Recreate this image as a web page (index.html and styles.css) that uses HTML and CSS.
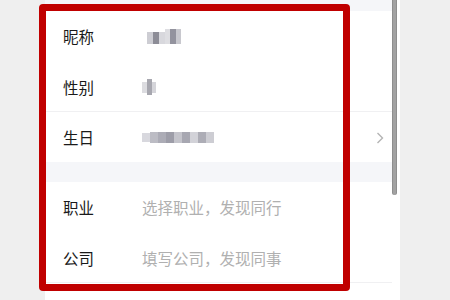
FILE: index.html
```html
<!DOCTYPE html>
<html lang="zh">
<head>
<meta charset="utf-8">
<link rel="stylesheet" href="styles.css">
</head>
<body>
<div class="page">
  <div class="panel">
    <div class="band top"></div>
    <div class="row">
      <span class="label">昵称</span>
      <span class="value">
        <svg class="mosaic nick" width="34" height="15" viewBox="0 0 34 15">
          <rect x="0" y="3" width="6" height="12" fill="#cdcdd3"/>
          <rect x="6" y="3" width="6" height="12" fill="#8d8d97"/>
          <rect x="12" y="3" width="6" height="12" fill="#d8d8dd"/>
          <rect x="18" y="0" width="5" height="15" fill="#dedee2"/>
          <rect x="23" y="0" width="6" height="15" fill="#93939e"/>
          <rect x="29" y="0" width="5" height="15" fill="#c8c8ce"/>
        </svg>
      </span>
    </div>
    <div class="row divided">
      <span class="label">性别</span>
      <span class="value">
        <svg class="mosaic" width="14" height="16" viewBox="0 0 14 16">
          <rect x="0" y="3" width="5" height="11" fill="#dcdce0"/>
          <rect x="5" y="0" width="5" height="16" fill="#a7a7af"/>
          <rect x="10" y="3" width="4" height="11" fill="#d5d5da"/>
        </svg>
      </span>
    </div>
    <div class="row">
      <span class="label">生日</span>
      <span class="value">
        <svg class="mosaic" width="72" height="15" viewBox="0 0 72 15">
          <rect x="0" y="3" width="8" height="9" fill="#d8d8de"/>
          <rect x="8" y="2" width="8" height="11" fill="#bcbcc4"/>
          <rect x="16" y="2" width="8" height="11" fill="#acacb6"/>
          <rect x="24" y="2" width="8" height="11" fill="#9d9da8"/>
          <rect x="32" y="2" width="8" height="11" fill="#c4c4cb"/>
          <rect x="40" y="2" width="8" height="11" fill="#a7a7b1"/>
          <rect x="48" y="2" width="8" height="11" fill="#d2d2d8"/>
          <rect x="56" y="2" width="8" height="11" fill="#adadb6"/>
          <rect x="64" y="2" width="8" height="11" fill="#cdcdd3"/>
        </svg>
      </span>
      <svg class="chev" width="8" height="12" viewBox="0 0 8 12">
        <path d="M1.5 1 L6.5 6 L1.5 11" fill="none" stroke="#b4b4b4" stroke-width="1.4"/>
      </svg>
    </div>
    <div class="band"></div>
    <div class="row">
      <span class="label">职业</span>
      <span class="value hint">选择职业，发现同行</span>
    </div>
    <div class="row divided">
      <span class="label">公司</span>
      <span class="value hint">填写公司，发现同事</span>
    </div>
    <div class="rest"></div>
    <div class="scrollbar"></div>
  </div>
  <div class="highlight"></div>
</div>
</body>
</html>
```
FILE: styles.css
```css
html, body {
  margin: 0;
  padding: 0;
}
body {
  background: #efefef;
  font-family: "Noto Sans CJK SC", "Noto Sans", sans-serif;
  width: 450px;
  height: 300px;
  overflow: hidden;
}
.page {
  position: relative;
  width: 450px;
  height: 300px;
}
.panel {
  position: relative;
  margin-left: 45px;
  width: 355px;
  height: 300px;
  background: #ffffff;
  display: flex;
  flex-direction: column;
}
.band {
  height: 20px;
  background: #f5f6f9;
  width: 347px;
}
.band.top {
  height: 11px;
}
.row {
  height: 50px;
  width: 347px;
  box-sizing: border-box;
  display: flex;
  align-items: center;
  padding-left: 18px;
  position: relative;
}
.row.divided {
  border-bottom: 1px solid #f0f0f2;
  height: 51px;
  padding-top: 1px;
}
.label {
  font-size: 15.5px;
  color: #1a1a1a;
  width: 79px;
  line-height: 20px;
}
.value {
  font-size: 15.5px;
  line-height: 20px;
  display: flex;
  align-items: center;
}
.hint {
  color: #b0b0b0;
}
.mosaic {
  display: block;
  filter: blur(0.7px);
}
.mosaic.nick {
  margin-left: 5px;
}
.chev {
  position: absolute;
  right: 8px;
  top: 20px;
}
.rest {
  flex: 1;
}
.scrollbar {
  position: absolute;
  left: 347px;
  top: 0;
  width: 5px;
  height: 195px;
  background: #a2a2a2;
  border-left: 1px solid #8e8e8e;
  border-right: 1px solid #8e8e8e;
  border-radius: 0 0 3px 3px;
  box-sizing: border-box;
}
.highlight {
  position: absolute;
  left: 39px;
  top: 4px;
  width: 311px;
  height: 287px;
  border: 7px solid #c00000;
  border-radius: 4px;
  box-sizing: border-box;
}
```
